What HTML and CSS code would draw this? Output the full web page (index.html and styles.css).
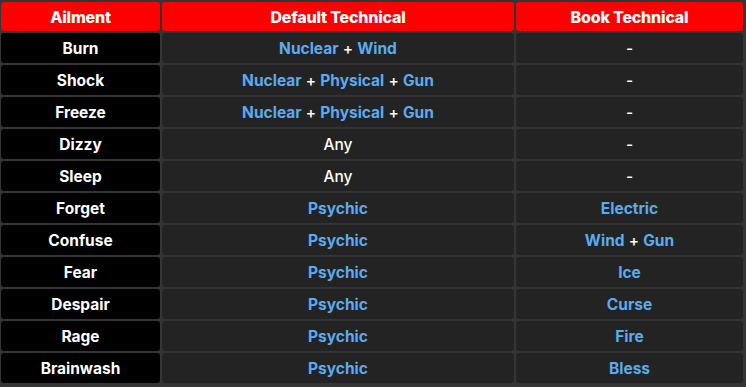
FILE: index.html
```html
<!DOCTYPE html>
<html>
<head>
<meta charset="utf-8">
<link rel="stylesheet" href="styles.css">
</head>
<body>
<div class="table">
  <div class="cell head"><span>Ailment</span></div>
  <div class="cell head"><span>Default Technical</span></div>
  <div class="cell head"><span>Book Technical</span></div>

  <div class="cell name"><span>Burn</span></div>
  <div class="cell"><span><b>Nuclear</b> + <b>Wind</b></span></div>
  <div class="cell plain"><span>-</span></div>

  <div class="cell name"><span>Shock</span></div>
  <div class="cell"><span><b>Nuclear</b> + <b>Physical</b> + <b>Gun</b></span></div>
  <div class="cell plain"><span>-</span></div>

  <div class="cell name"><span>Freeze</span></div>
  <div class="cell"><span><b>Nuclear</b> + <b>Physical</b> + <b>Gun</b></span></div>
  <div class="cell plain"><span>-</span></div>

  <div class="cell name"><span>Dizzy</span></div>
  <div class="cell plain"><span>Any</span></div>
  <div class="cell plain"><span>-</span></div>

  <div class="cell name"><span>Sleep</span></div>
  <div class="cell plain"><span>Any</span></div>
  <div class="cell plain"><span>-</span></div>

  <div class="cell name"><span>Forget</span></div>
  <div class="cell"><span><b>Psychic</b></span></div>
  <div class="cell"><span><b>Electric</b></span></div>

  <div class="cell name"><span>Confuse</span></div>
  <div class="cell"><span><b>Psychic</b></span></div>
  <div class="cell"><span><b>Wind</b> + <b>Gun</b></span></div>

  <div class="cell name"><span>Fear</span></div>
  <div class="cell"><span><b>Psychic</b></span></div>
  <div class="cell"><span><b>Ice</b></span></div>

  <div class="cell name"><span>Despair</span></div>
  <div class="cell"><span><b>Psychic</b></span></div>
  <div class="cell"><span><b>Curse</b></span></div>

  <div class="cell name"><span>Rage</span></div>
  <div class="cell"><span><b>Psychic</b></span></div>
  <div class="cell"><span><b>Fire</b></span></div>

  <div class="cell name"><span>Brainwash</span></div>
  <div class="cell"><span><b>Psychic</b></span></div>
  <div class="cell"><span><b>Bless</b></span></div>
</div>
</body>
</html>
```
FILE: styles.css
```css
html, body {
  margin: 0;
  padding: 0;
  background: #353535;
}
body {
  font-family: Inter, "Noto Sans", sans-serif;
  width: 746px;
  height: 387px;
  overflow: hidden;
}
.table {
  display: grid;
  grid-template-columns: 159px 352px 227px;
  grid-template-rows: 29px;
  grid-auto-rows: 30px;
  column-gap: 2px;
  row-gap: 2px;
  padding: 2px 3px 0 1px;
}
.cell {
  display: flex;
  align-items: center;
  justify-content: center;
  background: #232323;
  border-radius: 3px;
  font-size: 15.5px;
  font-weight: 500;
  color: #ffffff;
  white-space: pre;
}
.cell b {
  color: #5aabf0;
  font-weight: 700;
}
.cell.head {
  background: #ff0000;
  font-weight: 800;
  font-size: 16px;
  letter-spacing: -0.2px;
}
.cell.name {
  background: #000000;
  font-weight: 700;
}
.cell.plain {
  font-weight: 500;
}
```
